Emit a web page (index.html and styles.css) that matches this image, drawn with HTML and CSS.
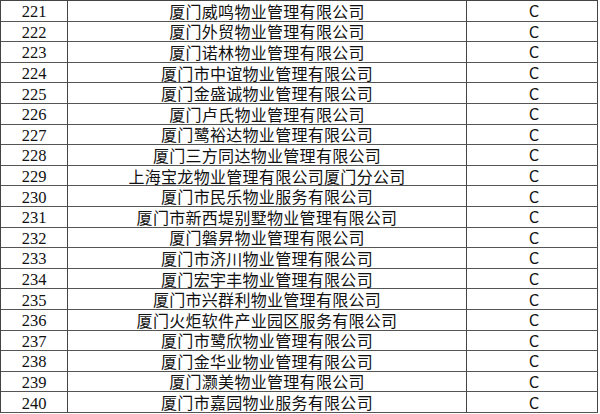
FILE: index.html
```html
<!DOCTYPE html>
<html lang="zh-CN">
<head>
<meta charset="utf-8">
<link rel="stylesheet" href="styles.css">
</head>
<body>
<div class="table">
  <div class="row"><div class="num">221</div><div class="name">厦门威鸣物业管理有限公司</div><div class="grade">C</div></div>
  <div class="row"><div class="num">222</div><div class="name">厦门外贸物业管理有限公司</div><div class="grade">C</div></div>
  <div class="row"><div class="num">223</div><div class="name">厦门诺林物业管理有限公司</div><div class="grade">C</div></div>
  <div class="row"><div class="num">224</div><div class="name">厦门市中谊物业管理有限公司</div><div class="grade">C</div></div>
  <div class="row"><div class="num">225</div><div class="name">厦门金盛诚物业管理有限公司</div><div class="grade">C</div></div>
  <div class="row"><div class="num">226</div><div class="name">厦门卢氏物业管理有限公司</div><div class="grade">C</div></div>
  <div class="row"><div class="num">227</div><div class="name">厦门鹭裕达物业管理有限公司</div><div class="grade">C</div></div>
  <div class="row"><div class="num">228</div><div class="name">厦门三方同达物业管理有限公司</div><div class="grade">C</div></div>
  <div class="row"><div class="num">229</div><div class="name">上海宝龙物业管理有限公司厦门分公司</div><div class="grade">C</div></div>
  <div class="row"><div class="num">230</div><div class="name">厦门市民乐物业服务有限公司</div><div class="grade">C</div></div>
  <div class="row"><div class="num">231</div><div class="name">厦门市新西堤别墅物业管理有限公司</div><div class="grade">C</div></div>
  <div class="row"><div class="num">232</div><div class="name">厦门磐昇物业管理有限公司</div><div class="grade">C</div></div>
  <div class="row"><div class="num">233</div><div class="name">厦门市济川物业管理有限公司</div><div class="grade">C</div></div>
  <div class="row"><div class="num">234</div><div class="name">厦门宏宇丰物业管理有限公司</div><div class="grade">C</div></div>
  <div class="row"><div class="num">235</div><div class="name">厦门市兴群利物业管理有限公司</div><div class="grade">C</div></div>
  <div class="row"><div class="num">236</div><div class="name">厦门火炬软件产业园区服务有限公司</div><div class="grade">C</div></div>
  <div class="row"><div class="num">237</div><div class="name">厦门市鹭欣物业管理有限公司</div><div class="grade">C</div></div>
  <div class="row"><div class="num">238</div><div class="name">厦门金华业物业管理有限公司</div><div class="grade">C</div></div>
  <div class="row"><div class="num">239</div><div class="name">厦门灏美物业管理有限公司</div><div class="grade">C</div></div>
  <div class="row"><div class="num">240</div><div class="name">厦门市嘉园物业服务有限公司</div><div class="grade">C</div></div>
</div>
</body>
</html>
```
FILE: styles.css
```css
html, body {
  margin: 0;
  padding: 0;
  background: #ffffff;
}
.table {
  width: 598px;
  border-top: 1px solid #444;
  border-left: 1px solid #444;
  box-sizing: border-box;
  color: #111;
}
.row {
  display: grid;
  grid-template-columns: 67px 399px 131px;
  height: 20.6px;
  box-sizing: border-box;
}
.row > div {
  border-right: 1px solid #444;
  border-bottom: 1px solid #555;
  display: flex;
  align-items: center;
  justify-content: center;
  white-space: nowrap;
  line-height: 16px;
}
.num {
  font-family: "Liberation Serif", serif;
  font-size: 16.5px;
  padding-top: 3px;
}
.name {
  font-family: "Noto Sans CJK SC", sans-serif;
  font-size: 16px;
  letter-spacing: 0.3px;
}
.grade {
  font-family: "Liberation Sans Narrow", "DejaVu Sans Condensed", sans-serif;
  font-size: 16px;
  padding-left: 4px;
  padding-top: 3px;
}
```
